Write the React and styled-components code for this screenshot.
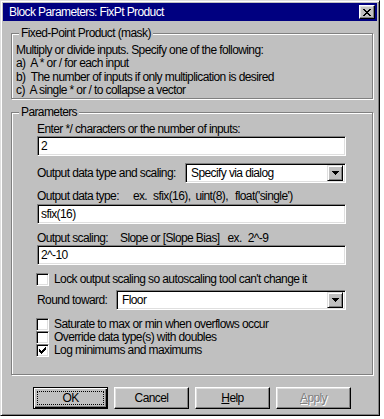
import React from 'react';
import styled, { createGlobalStyle } from 'styled-components';

const GlobalStyle = createGlobalStyle`
  html, body { margin: 0; padding: 0; background: #ffffff; }
  body { font-family: "Liberation Sans", Arial, sans-serif; font-size: 12px; color: #000; }
  * { box-sizing: border-box; }
`;

const Window = styled.div`
  width: 380px;
  height: 416px;
  background: #c0c0c0;
  border: 1px solid;
  border-color: #dfdfdf #000000 #000000 #dfdfdf;
  box-shadow: inset 1px 1px 0 #ffffff, inset -1px -1px 0 #808080;
  padding: 2px;
  display: flex;
  flex-direction: column;
  letter-spacing: -0.6px;
`;

const TitleBar = styled.div`
  height: 18px;
  flex: none;
  background: #000080;
  color: #ffffff;
  display: flex;
  align-items: center;
  justify-content: space-between;
  padding: 0 2px 0 6px;
  line-height: 13px;
`;

const CloseButton = styled.div`
  width: 16px;
  height: 14px;
  background: #c0c0c0;
  border: 1px solid;
  border-color: #ffffff #000000 #000000 #ffffff;
  box-shadow: inset -1px -1px 0 #808080, inset 1px 1px 0 #dfdfdf;
  display: flex;
  align-items: center;
  justify-content: center;
`;

const Body = styled.div`
  flex: 1;
  display: flex;
  flex-direction: column;
  padding: 0 4px 0 8px;
`;

const Group = styled.div`
  position: relative;
  flex: none;
  border: 1px solid #808080;
  box-shadow: inset 1px 1px 0 #ffffff, 1px 1px 0 #ffffff;
  margin-top: ${p => p.$mt}px;
  height: ${p => p.$h}px;
  padding: ${p => p.$pad};
  display: flex;
  flex-direction: column;
`;

const Legend = styled.span`
  position: absolute;
  top: -7px;
  left: 7px;
  padding: 0 2px;
  background: #c0c0c0;
  line-height: 13px;
`;

const TextLine = styled.div`
  line-height: 13.3px;
  white-space: pre;
`;

const Label = styled.div`
  line-height: 13px;
  margin-top: ${p => p.$mt || 0}px;
  white-space: pre;
`;

const Hint = styled.span`
  margin-left: ${p => p.$ml}px;
`;

const Field = styled.input`
  display: block;
  width: 100%;
  height: 20px;
  margin: ${p => p.$mt || 0}px 0 0 0;
  background: #ffffff;
  border: 1px solid;
  border-color: #808080 #ffffff #ffffff #808080;
  box-shadow: inset 1px 1px 0 #000000, inset -1px -1px 0 #dfdfdf;
  padding: 0 3px;
  font-family: "Liberation Sans", Arial, sans-serif;
  font-size: 12px;
  letter-spacing: -0.6px;
  color: #000;
  outline: none;
`;

const Row = styled.div`
  display: flex;
  align-items: center;
  height: ${p => p.$h || 20}px;
  margin-top: ${p => p.$mt || 0}px;
`;

const Select = styled.div`
  display: flex;
  align-items: center;
  width: ${p => p.$w}px;
  height: 20px;
  margin-left: auto;
  background: #ffffff;
  border: 1px solid;
  border-color: #808080 #ffffff #ffffff #808080;
  box-shadow: inset 1px 1px 0 #000000, inset -1px -1px 0 #dfdfdf;
  padding: 2px 2px 2px 5px;
`;

const SelectText = styled.span`
  flex: 1;
  line-height: 13px;
`;

const ArrowButton = styled.div`
  width: 16px;
  height: 16px;
  background: #c0c0c0;
  border: 1px solid;
  border-color: #dfdfdf #000000 #000000 #dfdfdf;
  box-shadow: inset 1px 1px 0 #ffffff, inset -1px -1px 0 #808080;
  display: flex;
  align-items: center;
  justify-content: center;
`;

const CheckRow = styled.div`
  display: flex;
  align-items: center;
  height: 13px;
  margin-top: ${p => p.$mt || 0}px;
  margin-left: -1px;
  line-height: 13px;
`;

const CheckBox = styled.span`
  flex: none;
  width: 13px;
  height: 13px;
  margin-right: 5px;
  background: #ffffff;
  border: 1px solid;
  border-color: #808080 #ffffff #ffffff #808080;
  box-shadow: inset 1px 1px 0 #000000, inset -1px -1px 0 #dfdfdf;
  display: flex;
  align-items: center;
  justify-content: center;
`;

const ButtonRow = styled.div`
  display: flex;
  gap: 6px;
  margin-top: 12px;
  padding-left: 22px;
`;

const Button = styled.div`
  position: relative;
  width: 75px;
  height: 22px;
  background: #c0c0c0;
  border: 1px solid;
  border-color: ${p => (p.$default ? '#000000' : '#ffffff #000000 #000000 #ffffff')};
  box-shadow: ${p =>
    p.$default
      ? 'inset 1px 1px 0 #ffffff, inset -1px -1px 0 #000000, inset -2px -2px 0 #808080'
      : 'inset -1px -1px 0 #808080, inset 1px 1px 0 #dfdfdf'};
  display: flex;
  align-items: center;
  justify-content: center;
  line-height: 13px;
  color: ${p => (p.$disabled ? '#808080' : '#000000')};
  text-shadow: ${p => (p.$disabled ? '1px 1px 0 #ffffff' : 'none')};
`;

const Focus = styled.span`
  position: absolute;
  inset: 3px 3px 3px 3px;
  border: 1px dotted #000000;
`;

const Mnemonic = styled.span`
  text-decoration: underline;
`;

const CloseIcon = () => (
  <svg width="8" height="7" viewBox="0 0 8 7" shapeRendering="crispEdges">
    <path d="M0 0h2v1h-2zM6 0h2v1h-2zM1 1h2v1h-2zM5 1h2v1h-2zM2 2h4v1h-4zM3 3h2v1h-2zM2 4h4v1h-4zM1 5h2v1h-2zM5 5h2v1h-2zM0 6h2v1h-2zM6 6h2v1h-2z" fill="#000" />
  </svg>
);

const DownArrow = () => (
  <svg width="7" height="4" viewBox="0 0 7 4" shapeRendering="crispEdges">
    <path d="M0 0h7v1h-7zM1 1h5v1h-5zM2 2h3v1h-3zM3 3h1v1h-1z" fill="#000" />
  </svg>
);

const CheckMark = () => (
  <svg width="7" height="7" viewBox="0 0 7 7" shapeRendering="crispEdges">
    <path d="M6 0h1v3h-1zM5 1h1v3h-1zM4 2h1v3h-1zM3 3h1v3h-1zM2 4h1v3h-1zM1 3h1v3h-1zM0 2h1v3h-1z" fill="#000" />
  </svg>
);

const Check = ({ checked, children, mt }) => (
  <CheckRow $mt={mt}>
    <CheckBox>{checked && <CheckMark />}</CheckBox>
    <span>{children}</span>
  </CheckRow>
);

export default function App() {
  return (
    <>
      <GlobalStyle />
      <Window>
        <TitleBar>
          <span>Block Parameters: FixPt Product</span>
          <CloseButton>
            <CloseIcon />
          </CloseButton>
        </TitleBar>
        <Body>
          <Group $mt={12} $h={66} $pad="10px 4px 0 4px">
            <Legend>Fixed-Point Product (mask)</Legend>
            <TextLine>Multiply or divide inputs. Specify one of the following:</TextLine>
            <TextLine>a)  A * or / for each input</TextLine>
            <TextLine>b)  The number of inputs if only multiplication is desired</TextLine>
            <TextLine>c)  A single * or / to collapse a vector</TextLine>
          </Group>
          <Group $mt={13} $h={263} $pad="10px 26px 0 25px">
            <Legend>Parameters</Legend>
            <Label>Enter */ characters or the number of inputs:</Label>
            <Field defaultValue="2" readOnly />
            <Row $mt={7}>
              <span>Output data type and scaling:</span>
              <Select $w={161}>
                <SelectText>Specify via dialog</SelectText>
                <ArrowButton>
                  <DownArrow />
                </ArrowButton>
              </Select>
            </Row>
            <Label $mt={7}>
              Output data type:<Hint $ml={14}>ex.</Hint>
              <Hint $ml={6}>sfix(16),</Hint>
              <Hint $ml={5}>uint(8),</Hint>
              <Hint $ml={7}>float('single')</Hint>
            </Label>
            <Field $mt={1} defaultValue="sfix(16)" readOnly />
            <Label $mt={8}>
              Output scaling:<Hint $ml={12}>Slope or [Slope Bias]</Hint>
              <Hint $ml={8}>ex.</Hint>
              <Hint $ml={6}>2^-9</Hint>
            </Label>
            <Field defaultValue="2^-10" readOnly />
            <Check mt={8}>Lock output scaling so autoscaling tool can't change it</Check>
            <Row $mt={4}>
              <span>Round toward:</span>
              <Select $w={230}>
                <SelectText>Floor</SelectText>
                <ArrowButton>
                  <DownArrow />
                </ArrowButton>
              </Select>
            </Row>
            <Check mt={8}>Saturate to max or min when overflows occur</Check>
            <Check>Override data type(s) with doubles</Check>
            <Check checked>Log minimums and maximums</Check>
          </Group>
          <ButtonRow>
            <Button $default>
              <Focus />
              OK
            </Button>
            <Button>Cancel</Button>
            <Button>
              <span>
                <Mnemonic>H</Mnemonic>elp
              </span>
            </Button>
            <Button $disabled>
              <span>
                <Mnemonic>A</Mnemonic>pply
              </span>
            </Button>
          </ButtonRow>
        </Body>
      </Window>
    </>
  );
}
